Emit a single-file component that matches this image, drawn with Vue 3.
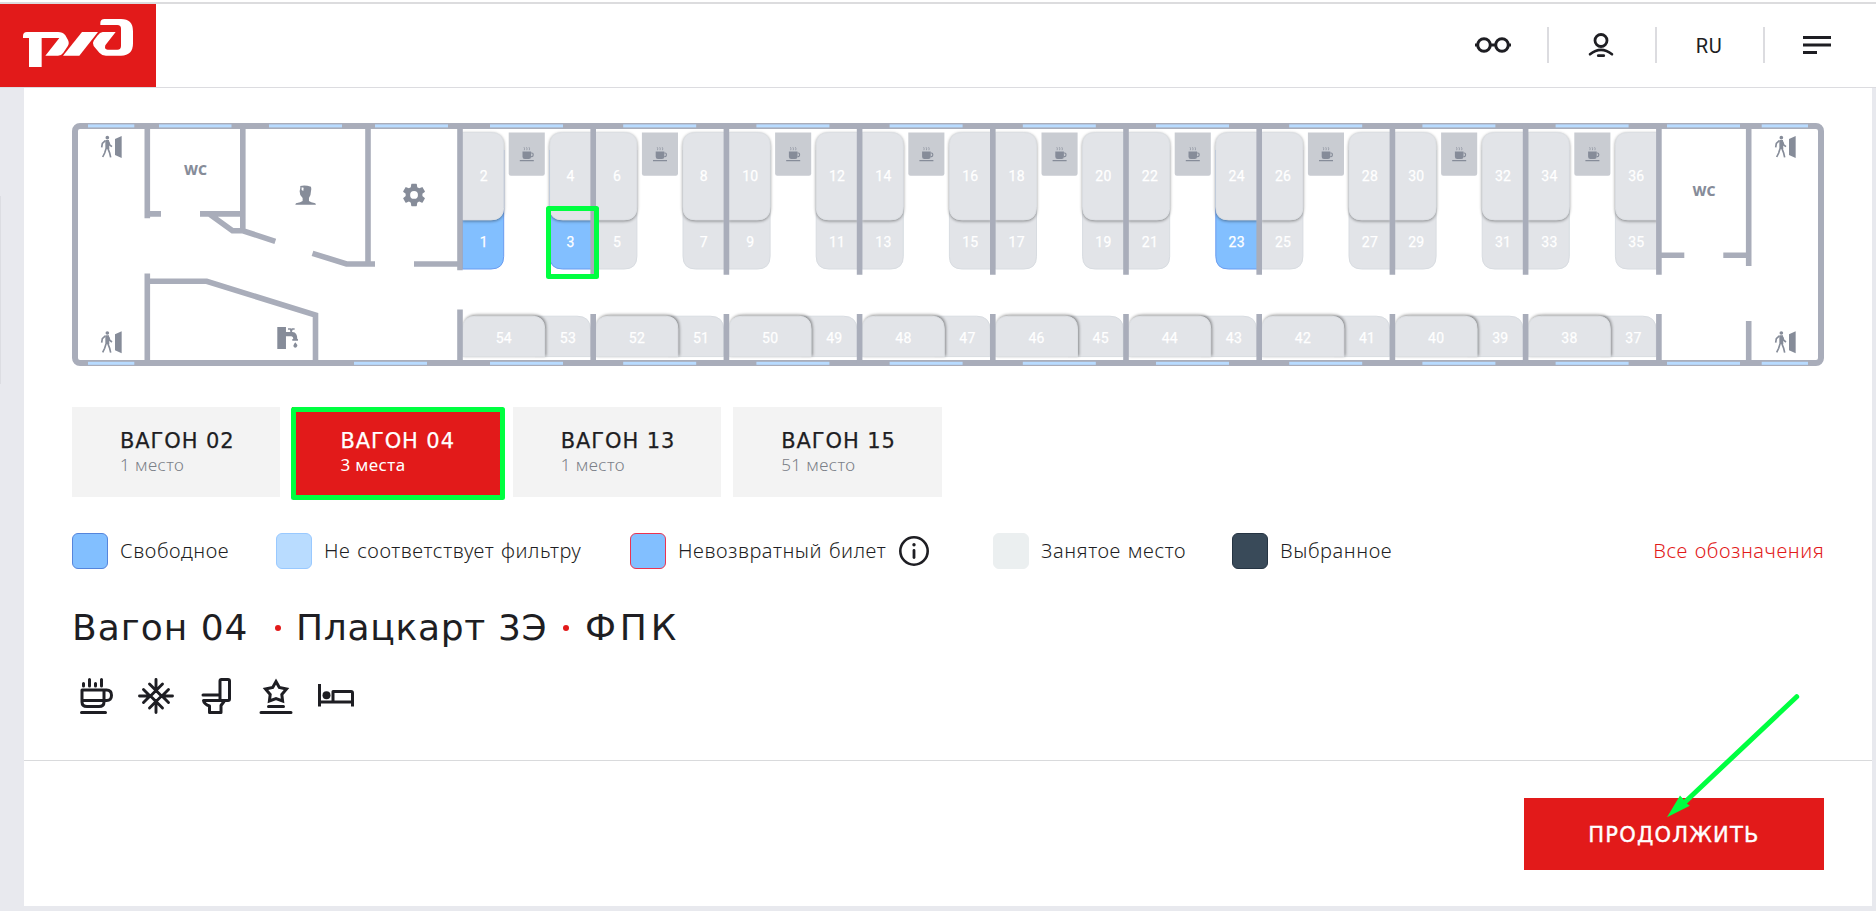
<script setup>
const PITCH = 133.2
const START = 460
const free = [1, 3, 23]

const bays = Array.from({ length: 9 }, (_, i) => ({
  x: START + i * PITCH,
  upper: [4 * i + 2, 4 * i + 4],
  lower: [4 * i + 1, 4 * i + 3],
  side: [54 - 2 * i, 53 - 2 * i],
}))
const walls = Array.from({ length: 8 }, (_, i) => START + (i + 1) * PITCH)

const bayWindows = bays.map((b) => [b.x + 30, 73])
const topWindows = [[88, 46.3], [159, 72.5], [269, 73], [375, 73], ...bayWindows, [1667, 73], [1761.7, 46.3]]
const bottomWindows = [[88, 46.3], [354, 73], ...bayWindows, [1667, 73], [1761.7, 46.3]]
const exits = [[101, 136], [101, 331.3], [1775, 136], [1775, 331.3]]

const cars = [
  { name: 'ВАГОН 02', seats: '1 место' },
  { name: 'ВАГОН 04', seats: '3 места', active: true },
  { name: 'ВАГОН 13', seats: '1 место' },
  { name: 'ВАГОН 15', seats: '51 место' },
]
const legend = [
  { cls: 'free', text: 'Свободное' },
  { cls: 'filtered', text: 'Не соответствует фильтру' },
  { cls: 'fixed', text: 'Невозвратный билет', info: true },
  { cls: 'taken', text: 'Занятое место' },
  { cls: 'chosen', text: 'Выбранное' },
]
</script>

<template>
  <div class="page">
    <header class="header">
      <a class="logo">
        <svg width="156" height="83" viewBox="0 12 468 249" fill="#fff">
          <path d="M69 114V108Q69 96 81 96H174Q188 96 196 106L204 120Q209 130 203 139L190 158Q184 167 174 167H136L178 114H125V201H87V114Z" />
          <path d="M189 167L246 96H294L238 167Z" />
          <path d="M301 75V69Q301 57 314 57H363Q399 57 399 94V130Q399 167 363 167H318Q306 167 298 158L281 138Q276 130 281 122L292 107Q300 96 308 96H347L316 136Q312 149 323 149H352Q363 149 363 138V86Q363 75 352 75Z" />
        </svg>
      </a>
      <nav class="tools">
        <div class="tool">
          <svg width="36" height="18" viewBox="0 0 36 18" fill="none" stroke="#1e1e23" stroke-width="3">
            <circle cx="9" cy="9" r="6.3" /><circle cx="27" cy="9" r="6.3" /><path d="M15.500 9h5M0 9h2.500M33.500 9H36" />
          </svg>
        </div>
        <div class="tool">
          <svg width="26" height="26" viewBox="0 0 26 26" fill="none" stroke="#1e1e23" stroke-width="2.8">
            <circle cx="13" cy="8.500" r="6" /><path d="M2 22.300Q13 13.400 24 22.300" stroke-linecap="round" stroke-width="2.600" /><path d="M10.300 23.700h5.400" stroke-linecap="round" />
          </svg>
        </div>
        <div class="tool lang">RU</div>
        <div class="tool">
          <svg width="28" height="18" viewBox="0 0 28 18" fill="#1e1e23"><path d="M0 0h28v3H0zM0 7.500h28v3H0zM0 15h14v3H0z" /></svg>
        </div>
      </nav>
    </header>

    <main class="panel">
      <section class="content">
        <svg class="plan" viewBox="72 123 1752 243">
          <g v-for="b in bays" :key="b.x">
            <path class="seat" :class="{ open: free.includes(b.lower[0]) }" :d="`M${b.x + 2.500} 150h41.200v106.300q0 12.700-12.700 12.700h-28.500z`" />
            <path class="seat" :class="{ open: free.includes(b.lower[1]) }" :d="`M${b.x + 131.500} 150h-41.700v106.300q0 12.700 12.700 12.700h29z`" />
            <path class="seat raised" :d="`M${b.x + 2.500} 132.500h28.500q12.700 0 12.700 12.700v62q0 12.700-12.700 12.700h-28.500z`" />
            <path class="seat raised" :d="`M${b.x + 131.500} 132.500h-29q-12.700 0-12.700 12.700v62q0 12.700 12.700 12.700h29z`" />
            <path class="seat" :d="`M${b.x + 75} 356.600v-40.400h42q13.500 0 13.500 13.500v26.900z`" />
            <path class="seat raised side" :d="`M${b.x + 2.500} 356.600v-27q0-13.400 13.500-13.400h56q12.700 0 12.700 12.700v27.700z`" />
            <path class="table" :d="`M${b.x + 48.700} 132.600h36.100v41q0 2.200-2.200 2.200h-31.700q-2.200 0-2.200-2.200z`" />
            <g :transform="`translate(${b.x + 59.500} 147)`" class="cup">
              <path d="M3 4.500h8.600v5.200q0 2.300-2.300 2.300h-4q-2.300 0-2.300-2.300zM.3 13h14v1.200H.3z" />
              <path class="cup-line" d="M11.600 6h.8q1.300 0 1.300 1.700t-1.300 1.900h-.8" />
              <path class="steam" d="M4.500.2q1 1.500.3 3M7 .2q1 1.500.3 3M9.500.2q1 1.500.3 3" />
            </g>
            <g class="nums">
              <text :x="b.x + 23.900" y="181.300">{{ b.upper[0] }}</text>
              <text :x="b.x + 110.700" y="181.300">{{ b.upper[1] }}</text>
              <text :x="b.x + 23.900" y="247.200">{{ b.lower[0] }}</text>
              <text :x="b.x + 110.700" y="247.200">{{ b.lower[1] }}</text>
              <text :x="b.x + 43.800" y="343.300">{{ b.side[0] }}</text>
              <text :x="b.x + 107.900" y="343.300">{{ b.side[1] }}</text>
            </g>
          </g>

          <g class="wall">
            <rect x="75" y="126" width="1746" height="237" rx="5" />
            <path d="M147.300 126V218.300M147.300 213.900H161M200 213.900H242.800M242.800 126V231M210 214.500L232.500 230.800H243L275.300 241.300M312.500 253.300L346.500 264H375M368 126V264M414 264H460" />
            <path d="M147.300 273.500V363M147.300 281.300H206.700L315.500 315V363" />
            <path d="M460 126V270.300M460 309.500V363" />
            <path v-for="w in walls" :key="w" :d="`M${w} 126V274.800M${w} 314V363`" />
            <path d="M1658.900 126V274.800M1658.900 314V363M1748.700 126V266M1748.700 321V363M1659 255.300H1684.300M1723.300 255.300H1748.700" />
          </g>
          <g class="window">
            <rect v-for="w in topWindows" :key="'t' + w[0]" :x="w[0]" y="124.400" :width="w[1]" height="3" />
            <rect v-for="w in bottomWindows" :key="'b' + w[0]" :x="w[0]" y="361.800" :width="w[1]" height="3" />
          </g>

          <g v-for="(e, i) in exits" :key="i" class="glyph" :transform="`translate(${e[0]} ${e[1]}) scale(.3333)`">
            <circle cx="19" cy="5" r="5.500" />
            <path d="M13 12H24L25 39H13ZM42 9L62 0V66L42 57Z" />
            <path class="limb" d="M13 14L4 22L2 34M23 17L26 27L33 32M15 38L11 51L5 63M21 38L26 51L29 64" />
          </g>
          <g class="wc">
            <text x="195.500" y="175">WC</text>
            <text x="1704" y="195.800">WC</text>
          </g>
          <g class="glyph" transform="translate(295.300 185.300) scale(.3333)">
            <path d="M15 2Q30-1 47 4Q49 10 47 18Q47 30 41 38V47Q46 51 60 54L62 58H0L2 54Q17 51 22 47V38Q12 28 13 18Q16 8 15 2Z" />
            <path d="M19 6l6 1-1 10-5-3z" fill="#fff" />
          </g>
          <g class="glyph" transform="translate(400.600 181.500) scale(1.12)">
            <path d="M19.430 12.980c.04-.32.070-.64.070-.98s-.03-.66-.07-.98l2.110-1.650c.19-.15.24-.42.120-.64l-2-3.460c-.12-.22-.39-.3-.61-.22l-2.490 1c-.52-.4-1.080-.73-1.690-.98l-.38-2.650C14.460 2.180 14.250 2 14 2h-4c-.25 0-.46.180-.49.420l-.38 2.650c-.61.250-1.170.590-1.690.980l-2.490-1c-.23-.09-.49 0-.61.220l-2 3.460c-.13.220-.07.490.120.640l2.110 1.650c-.04.320-.07.650-.07.980s.030.660.070.980l-2.110 1.650c-.19.150-.24.420-.12.640l2 3.460c.120.220.390.300.610.220l2.490-1c.520.400 1.080.730 1.690.980l.38 2.650c.030.240.240.420.490.420h4c.250 0 .460-.18.490-.42l.380-2.650c.610-.25 1.170-.59 1.690-.98l2.490 1c.230.090.490 0 .610-.22l2-3.460c.120-.22.070-.49-.12-.64zM12 15.500a3.500 3.500 0 1 1 0-7 3.500 3.500 0 0 1 0 7z" />
          </g>
          <g class="glyph" transform="translate(277.300 327) scale(.3333)">
            <path d="M0 0H26V66H0ZM26 15H46Q60 16 60 36H62V41H45V36H48Q48 28 42 28H26ZM32 4H40Q42 6 44 4H52V8H46L44 15H39L38 8H32ZM54 46Q61 54 60 57Q58 62 54 62T48 57Q48 53 54 46Z" />
          </g>
        </svg>

        <div class="cars">
          <button v-for="c in cars" :key="c.name" class="car" :class="{ active: c.active }">
            <span class="car-name">{{ c.name }}</span>
            <span class="car-seats">{{ c.seats }}</span>
          </button>
        </div>

        <div class="legend">
          <div v-for="l in legend" :key="l.cls" class="legend-item">
            <i class="swatch" :class="l.cls"></i>
            <span class="legend-text">{{ l.text }}</span>
            <svg v-if="l.info" class="info" width="30" height="30" viewBox="0 0 30 30">
              <circle cx="15" cy="15" r="13.700" fill="none" stroke="#1e1e23" stroke-width="2.600" />
              <circle cx="15" cy="8.800" r="1.700" fill="#1e1e23" />
              <path d="M15 14.500v7" stroke="#1e1e23" stroke-width="2.800" stroke-linecap="round" />
            </svg>
          </div>
          <a class="all legend-text">Все обозначения</a>
        </div>

        <h1 class="title">
          <span class="t1">Вагон 04</span><i class="dot"></i><span class="t2">Плацкарт 3Э</span><i class="dot"></i><span class="t3">ФПК</span>
        </h1>

        <div class="amenities">
          <svg viewBox="0 0 36 36">
            <path d="M4 12H26V24Q26 28.500 21 28.500H9Q4 28.500 4 24ZM4 22.500H26M26 12H28.500Q33.500 12 33.500 17.300T28.500 22.500H26M3.500 34.500H27.500M5.500 5.500V8M11.500 1.500V8M17.500 5.500V8M23.500 1.500V8" />
          </svg>
          <svg viewBox="0 0 36 36" class="snow">
            <path d="M18 1.500V12M18 24V34.500M1.500 18H12M24 18H34.500M11.500 6L18 12.500L24.500 6M11.500 30L18 23.500L24.500 30M5.500 11.500L12 18L5.500 24.500M30.500 11.500L24 18L30.500 24.500M18 12.500L23.500 18L18 23.500L12.500 18Z" />
          </svg>
          <svg viewBox="0 0 36 36">
            <path d="M5 17H21M22 22.500V3Q22 1.500 23.500 1.500H30Q31.500 1.500 31.500 3V21Q31.500 22.500 30 22.500H5.500Q6 26 11.500 28V34.500H23V27.500L26 23.500" />
          </svg>
          <svg viewBox="0 0 36 36">
            <path d="M18 3.500L21.300 9.500L28.500 11L23.800 16.500L24.600 23L18 20.500L11.400 23L12.200 16.500L7.500 11L14.700 9.500ZM10.500 28.500H25.500M3 34.500H33" stroke-linejoin="miter" />
          </svg>
          <svg viewBox="0 0 36 36">
            <path d="M1.500 6V28.500M1.500 24H34.500M15 24V13.500H33Q34.500 13.500 34.500 15V28.500" stroke-linecap="butt" />
            <circle cx="8.500" cy="17.300" r="4" fill="#1e1e23" stroke="none" />
          </svg>
        </div>
      </section>

      <footer class="actions">
        <button class="continue">ПРОДОЛЖИТЬ</button>
      </footer>
    </main>

    <svg class="marks" width="1876" height="911" viewBox="0 0 1876 911" fill="none" stroke="#00ff40" stroke-width="5">
      <rect x="548.500" y="208.500" width="48" height="68" stroke-linejoin="round" />
      <rect x="293.500" y="409.500" width="209" height="88" stroke-linejoin="round" />
      <path d="M1796.700 696.700L1684 803" stroke-linecap="round" />
      <path d="M1667 817.300L1680 795.500L1684.500 800.500L1686 803L1689.800 805.800Z" fill="#00ff40" stroke="none" />
    </svg>
  </div>
</template>

<style>
body {
  margin: 0;
  overflow: hidden;
}
</style>

<style scoped>
.page {
  position: relative;
  width: 1876px;
  height: 911px;
  background: #e8e9ee;
  font-family: "Noto Sans", "Liberation Sans", sans-serif;
  color: #1e1e23;
  overflow: hidden;
}
.page::before {
  content: "";
  position: absolute;
  left: 0;
  top: 196px;
  width: 1px;
  height: 188px;
  background: #dcdde2;
}
.header {
  box-sizing: border-box;
  height: 88px;
  display: flex;
  justify-content: space-between;
  padding: 4px 5px 0 0;
  background: linear-gradient(#fff 2px, #dcdcde 2px, #dcdcde 4px, #fff 4px);
  border-bottom: 1px solid #dcdce0;
}
.logo {
  width: 156px;
  height: 83px;
  background: #e21a1a;
}
.logo svg {
  display: block;
}
.tools {
  display: flex;
  align-items: center;
  height: 82px;
}
.tool {
  box-sizing: border-box;
  width: 108px;
  height: 36px;
  display: flex;
  align-items: center;
  justify-content: center;
  border-left: 2px solid #dcdce0;
  padding-right: 2px;
}
.tool:first-child {
  border-left-color: transparent;
}
.lang {
  font-family: Roboto, sans-serif;
  font-size: 20px;
  letter-spacing: 0.7px;
  padding-top: 2px;
}
.panel {
  width: 1848px;
  height: 818px;
  margin-left: 24px;
  background: #fff;
}
.content {
  box-sizing: border-box;
  height: 673px;
  padding: 35px 48px 0;
  border-bottom: 1px solid #d9dadc;
}
.plan {
  display: block;
  width: 1752px;
  height: 243px;
}
.wall {
  fill: none;
  stroke: #a9adba;
  stroke-width: 5.6;
}
.wall rect {
  stroke-width: 6;
}
.window {
  fill: #b8dbff;
}
.seat {
  fill: #e2e4e8;
  stroke: #d8dce1;
  stroke-width: 1;
}
.seat.open {
  fill: #82bfff;
  stroke: #6a9cf0;
}
.seat.raised {
  stroke: #dcdfe3;
  filter: drop-shadow(0 1.5px 1.7px rgba(0, 0, 0, 0.4));
}
.seat.side {
  filter: drop-shadow(1.7px -0.5px 1.4px rgba(0, 0, 0, 0.42));
}
.table {
  fill: #c9ccd2;
}
.cup {
  fill: #868c99;
}
.cup-line,
.steam {
  fill: none;
  stroke: #868c99;
  stroke-width: 1.2;
}
.steam {
  stroke-width: 0.7;
}
.nums {
  font: 400 14px Roboto, sans-serif;
  fill: #fff;
  stroke: #fff;
  stroke-width: 0.25;
  text-anchor: middle;
  letter-spacing: 0.3px;
}
.glyph {
  fill: #868c99;
}
.limb {
  fill: none;
  stroke: #868c99;
  stroke-width: 5;
}
.wc {
  font: 800 14px "Noto Sans", sans-serif;
  fill: #868c99;
  text-anchor: middle;
}
.cars {
  display: flex;
  gap: 12px;
  margin-top: 41px;
}
.car {
  box-sizing: border-box;
  width: 208.4px;
  height: 90px;
  padding: 0 0 0 48px;
  border: 0;
  background: #f3f3f3;
  display: flex;
  flex-direction: column;
  align-items: flex-start;
  justify-content: center;
  color: #1e1e23;
  font-family: "Noto Sans", sans-serif;
}
.car-name {
  font: 400 21px/25px "DejaVu Sans", sans-serif;
  letter-spacing: 0.9px;
  white-space: nowrap;
  -webkit-text-stroke: 0.25px currentColor;
}
.car-seats {
  font-size: 17px;
  font-weight: 350;
  line-height: 22px;
  letter-spacing: 0.4px;
  color: #7b8088;
}
.car.active .car-seats {
  font-weight: 400;
}
.car.active {
  background: #e21a1a;
  color: #fff;
}
.car.active .car-seats {
  color: #fff;
}
.legend {
  display: grid;
  grid-template-columns: 204px 354px 363px 239px 200px 1fr;
  align-items: center;
  height: 36px;
  margin-top: 36px;
  font-size: 20px;
  font-weight: 350;
}
.legend-item {
  display: flex;
  align-items: center;
  white-space: nowrap;
}
.legend-text {
  letter-spacing: 0.58px;
  word-spacing: 1px;
  padding-bottom: 2px;
}
.swatch {
  box-sizing: border-box;
  width: 36px;
  height: 36px;
  margin-right: 12px;
  border-radius: 6px;
  border: 1.5px solid;
  flex: none;
}
.free {
  background: #82bfff;
  border-color: #5585dc;
}
.filtered {
  background: #b9dcff;
  border-color: #99c9ff;
}
.fixed {
  background: #82bfff;
  border-color: #ec3350;
}
.taken {
  background: #ebeff0;
  border-color: #ebeff0;
}
.chosen {
  background: #394a59;
  border-color: #253443;
}
.info {
  margin-left: 13px;
}
.all {
  justify-self: end;
  margin-right: -0.5px;
  color: #e21a1a;
}
.title {
  display: flex;
  align-items: center;
  height: 48px;
  margin: 35px 0 0;
  font: 400 36px/48px "DejaVu Sans", sans-serif;
  white-space: nowrap;
}
.t1 {
  width: 203px;
  letter-spacing: 1px;
}
.t2 {
  width: 267px;
  letter-spacing: 0.7px;
}
.t3 {
  margin-left: 1px;
  letter-spacing: 3.8px;
}
.dot {
  width: 6px;
  height: 6px;
  border-radius: 50%;
  background: #e21a1a;
  margin-right: 15px;
}
.amenities {
  display: flex;
  gap: 24px;
  margin: 26px 0 0 6px;
}
.amenities svg {
  width: 36px;
  height: 36px;
  fill: none;
  stroke: #1e1e23;
  stroke-width: 3;
  stroke-linecap: round;
  stroke-linejoin: round;
}
.amenities .snow {
  stroke-width: 2.9;
}
.actions {
  display: flex;
  justify-content: flex-end;
  padding: 37px 48px 0;
}
.continue {
  width: 300px;
  height: 72px;
  padding: 2px 0 0;
  border: 0;
  background: #e21a1a;
  color: #fff;
  font: 400 21px "DejaVu Sans", sans-serif;
  letter-spacing: 1.2px;
  -webkit-text-stroke: 0.4px #fff;
}
.marks {
  position: absolute;
  left: 0;
  top: 0;
}
</style>
